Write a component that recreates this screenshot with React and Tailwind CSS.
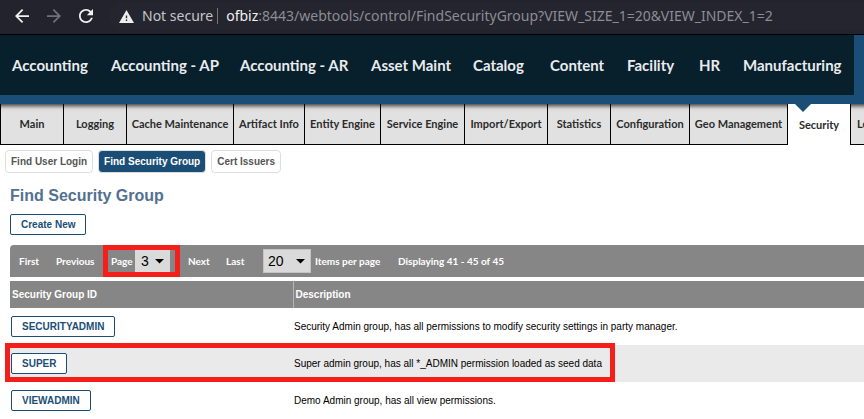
import React from "react";

const apps = [
  ["Accounting", "w-[99px]"],
  ["Accounting - AP", "w-[129px]"],
  ["Accounting - AR", "w-[131px]"],
  ["Asset Maint", "w-[102px]"],
  ["Catalog", "w-[77px]"],
  ["Content", "w-[77px]"],
  ["Facility", "w-[72px]"],
  ["HR", "w-11"],
  ["Manufacturing", "w-[105px]"],
];

const tabs = [
  ["Main", "w-[63px]"],
  ["Logging", "w-[63px]"],
  ["Cache Maintenance", "w-[107px]"],
  ["Artifact Info", "w-[71px]"],
  ["Entity Engine", "w-[76px]"],
  ["Service Engine", "w-[84px]"],
  ["Import/Export", "w-[83px]"],
  ["Statistics", "w-[63px]"],
  ["Configuration", "w-[79px]"],
  ["Geo Management", "w-[98px]"],
  ["Security", "w-[63px]"],
  ["Logout", "w-[47px]"],
];

const groups = [
  ["SECURITYADMIN", "Security Admin group, has all permissions to modify security settings in party manager."],
  ["SUPER", "Super admin group, has all *_ADMIN permission loaded as seed data"],
  ["VIEWADMIN", "Demo Admin group, has all view permissions."],
];

function BrowserBar() {
  return (
    <div className="flex h-[35px] items-center border-b border-black bg-[#22232d] pl-[15px] pb-[2px] font-['Noto_Sans',sans-serif] text-sm">
      <button aria-label="Back" className="mr-[18px] text-[#f1f1f1]">
        <svg width="14" height="14" viewBox="4 4 16 16" fill="currentColor">
          <path d="M20 11H7.83l5.59-5.59L12 4l-8 8 8 8 1.41-1.41L7.83 13H20v-2z" />
        </svg>
      </button>
      <button aria-label="Forward" className="mr-[18px] text-[#707078]">
        <svg width="14" height="14" viewBox="4 4 16 16" fill="currentColor">
          <path d="M12 4l-1.41 1.41L16.17 11H4v2h12.17l-5.58 5.59L12 20l8-8z" />
        </svg>
      </button>
      <button aria-label="Reload" className="text-[#f1f1f1]">
        <svg width="14" height="14" viewBox="4 4 16 16" fill="currentColor">
          <path d="M17.65 6.35C16.2 4.9 14.21 4 12 4c-4.42 0-7.99 3.58-7.99 8s3.57 8 7.99 8c3.73 0 6.84-2.55 7.73-6h-2.08c-.82 2.33-3.04 4-5.65 4-3.31 0-6-2.69-6-6s2.69-6 6-6c1.66 0 3.14.69 4.22 1.78L13 11h7V4l-2.35 2.35z" />
        </svg>
      </button>
      <div className="ml-4 flex h-7 flex-1 items-center rounded-l-full bg-[#24252f] pl-[10px]">
        <svg width="15" height="13" viewBox="1 2 22 19">
          <path d="M1 21h22L12 2 1 21zm12-3h-2v-2h2v2zm0-4h-2v-4h2v4z" fill="#eeeeee" />
        </svg>
        <span className="ml-2 text-[#c4c5ca]">Not secure</span>
        <span className="ml-1 h-4 w-px bg-[#74757c]" />
        <span className="ml-2 whitespace-nowrap text-[#8c8d94]">
          <span className="text-[#f1f1f1]">ofbiz</span>:8443/webtools/control/FindSecurityGroup?VIEW_SIZE_1=20&amp;VIEW_INDEX_1=2
        </span>
      </div>
    </div>
  );
}

function AppNav() {
  return (
    <nav aria-label="Applications" className="bg-[#1b4e77] pr-[10px] pb-[9px]">
      <ul className="flex h-[60px] items-center overflow-hidden bg-[#081f2c] pl-3 font-[Lato,sans-serif] text-[15px] font-bold text-[#e8ecee]">
        {apps.map(([name, width]) => (
          <li key={name} className={`${width} shrink-0 whitespace-nowrap`}>
            <a href="#">{name}</a>
          </li>
        ))}
      </ul>
    </nav>
  );
}

function TabBar() {
  return (
    <nav aria-label="Web tools" className="overflow-hidden">
      <ul className="flex h-[41px] font-[Lato,sans-serif] text-[11px] font-bold text-[#2b2b2b]">
        {tabs.map(([name, width]) =>
          name === "Security" ? (
            <li key={name} className={`${width} relative shrink-0 border-l border-black bg-white`}>
              <span className="absolute left-[7px] top-0 h-2 w-4 bg-[#1b4e77] [clip-path:polygon(0_0,100%_0,50%_100%)]" />
              <a href="#" aria-current="page" className="flex h-full items-center justify-center pt-[2px]">{name}</a>
            </li>
          ) : (
            <li
              key={name}
              className={`${width} shrink-0 border-b border-l border-black bg-[#e1e1e1] bg-[linear-gradient(#555_0,#aaa_3px,#d8d8d8_5px,#e1e1e1_8px)]`}
            >
              <a href="#" className="flex h-full items-center justify-center whitespace-nowrap">{name}</a>
            </li>
          )
        )}
      </ul>
    </nav>
  );
}

function PickerArrow() {
  return (
    <svg className="pointer-events-none absolute inset-y-0 right-[6px] my-auto" width="9" height="5" viewBox="0 0 9 5">
      <path d="M0 0h9L4.5 4.5z" fill="#000" />
    </svg>
  );
}

function Pager() {
  return (
    <div className="mt-[10px] flex h-8 items-center overflow-hidden whitespace-nowrap rounded-tl bg-[#868686] font-[Lato,sans-serif] text-[10px] font-bold text-white">
      <a href="#" className="ml-[9px] w-[37px] shrink-0">First</a>
      <a href="#" className="w-[47px] shrink-0">Previous</a>
      <div className="flex h-8 w-[77px] shrink-0 items-center border-[5px] border-[#f41f1b] pl-[3px]">
        <label htmlFor="page" className="w-6 shrink-0">Page</label>
        <span className="relative">
          <select id="page" defaultValue="3" className="block h-[22px] w-[35px] appearance-none bg-[#dadada] pl-[6px] font-['Liberation_Sans',sans-serif] text-sm font-normal text-black">
            <option>1</option>
            <option>2</option>
            <option>3</option>
          </select>
          <PickerArrow />
        </span>
      </div>
      <a href="#" className="ml-2 w-[38px] shrink-0">Next</a>
      <a href="#" className="w-[37px] shrink-0">Last</a>
      <span className="relative shrink-0">
        <select id="size" defaultValue="20" className="block h-6 w-12 appearance-none border border-[#c4c4c4] bg-[#dadada] pl-1 font-['Liberation_Sans',sans-serif] text-sm font-normal text-black">
          <option>20</option>
          <option>30</option>
          <option>100</option>
        </select>
        <PickerArrow />
      </span>
      <label htmlFor="size" className="ml-1 w-[83px] shrink-0">Items per page</label>
      <span>Displaying 41 - 45 of 45</span>
    </div>
  );
}

function GroupTable() {
  return (
    <table className="mt-1 w-full table-fixed border-collapse text-left">
      <thead>
        <tr className="h-[27px] bg-[#868686] text-white">
          <th className="w-[283px] border-r border-[#b5b5b5] pl-[2px]">Security Group ID</th>
          <th className="pl-[2px]">Description</th>
        </tr>
      </thead>
      <tbody>
        {groups.map(([id, text]) => (
          <tr key={id} className="h-[37px] text-black even:bg-[#eaeaea]">
            <td className="pl-px">
              <button className="block h-[21px] rounded-[2px] border border-[#1b4e77] bg-white px-[10px] font-bold text-[#1b4e77]">{id}</button>
            </td>
            <td className="relative whitespace-nowrap pl-px">
              {id === "SUPER" && (
                <span className="pointer-events-none absolute -left-[288px] -top-[2px] h-[39px] w-[610px] border-[5px] border-[#f41f1b]" />
              )}
              {text}
            </td>
          </tr>
        ))}
      </tbody>
    </table>
  );
}

export default function App() {
  return (
    <div className="overflow-hidden bg-white font-['Liberation_Sans',Arial,sans-serif] text-[10px]">
      <BrowserBar />
      <AppNav />
      <TabBar />
      <div className="mt-[5px] flex gap-[5px] pl-[5px] font-bold text-[#555]">
        <button className="h-[23px] rounded border border-[#ddd] px-[5px]">Find User Login</button>
        <button className="h-[23px] rounded border border-[#ddd] bg-[#1b4e77] px-[5px] text-white">Find Security Group</button>
        <button className="h-[23px] rounded border border-[#ddd] px-[5px]">Cert Issuers</button>
      </div>
      <main className="pl-[10px]">
        <h1 className="mt-[13px] text-base leading-5 font-bold text-[#527192]">Find Security Group</h1>
        <button className="mt-2 block h-[21px] rounded-[2px] border border-[#1b4e77] px-[10px] font-bold text-[#1b4e77]">Create New</button>
        <Pager />
        <GroupTable />
      </main>
    </div>
  );
}
